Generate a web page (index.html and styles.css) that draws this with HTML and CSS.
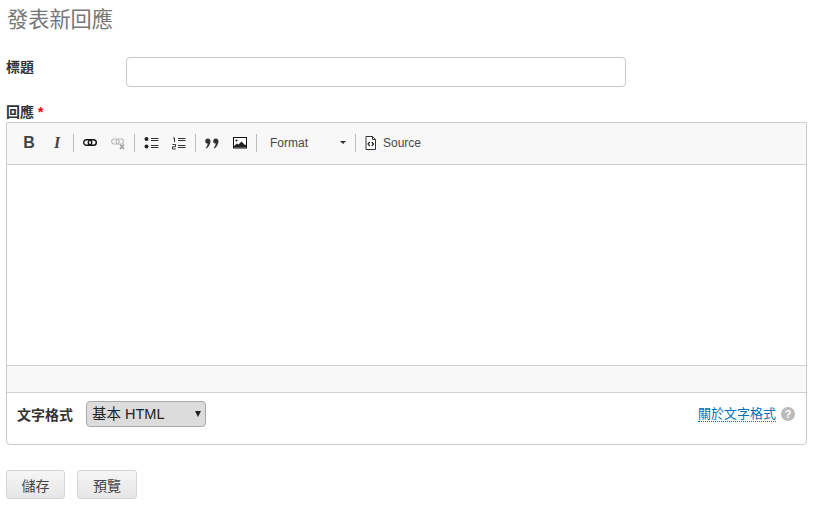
FILE: index.html
```html
<!DOCTYPE html>
<html lang="zh-Hant">
<head>
  <meta charset="UTF-8" />
  <title>發表新回應</title>
  <link rel="stylesheet" href="styles.css">
</head>
<body>
  <h2 class="page-title">發表新回應</h2>
  <form class="comment-form">
    <div class="title-row">
      <label class="field-label title-label" for="subject">標題</label>
      <input class="title-input" id="subject" type="text" />
    </div>
    <div class="field-label body-label">回應 <span class="required">*</span></div>
    <div class="filter-wrap">
      <div class="editor">
        <div class="toolbar">
          <span class="tool tool-b">B</span>
          <span class="tool tool-i">I</span>
          <span class="sep"></span>
          <span class="tool">
            <svg width="16" height="16" viewBox="0 0 16 16"><rect x="1.700" y="4.700" width="8" height="5.600" rx="2.800" fill="none" stroke="#111" stroke-width="1.400"/><rect x="6.300" y="4.700" width="8" height="5.600" rx="2.800" fill="none" stroke="#111" stroke-width="1.400"/></svg>
          </span>
          <span class="tool">
            <svg width="16" height="16" viewBox="0 0 16 16"><rect x="1.600" y="4" width="7.500" height="5" rx="2.500" fill="none" stroke="#bbb" stroke-width="1.200"/><rect x="6" y="4" width="7.500" height="5" rx="2.500" fill="none" stroke="#bbb" stroke-width="1.200"/><path d="M10 9.500l4 4.500M14 9.500L10 14" stroke="#999" stroke-width="1.300"/></svg>
          </span>
          <span class="sep"></span>
          <span class="tool">
            <svg width="16" height="16" viewBox="0 0 16 16"><circle cx="3.500" cy="4" r="2" fill="#222"/><circle cx="3.500" cy="11.500" r="2" fill="#222"/><path d="M8 3.500h7.500M8 5.500h7.500M8 10.500h7.500M8 12.500h7.500" stroke="#333" stroke-width="1"/></svg>
          </span>
          <span class="tool">
            <svg width="16" height="16" viewBox="0 0 16 16"><path d="M2 3h1.500v4" fill="none" stroke="#333" stroke-width="1"/><path d="M1.500 9.500h3v2.300h-3V14h3.200" fill="none" stroke="#333" stroke-width="1"/><path d="M7 3.500h7.500M7 5.500h7.500M7 10.500h7.500M7 12.500h7.500" stroke="#333" stroke-width="1"/></svg>
          </span>
          <span class="sep"></span>
          <span class="tool">
            <svg width="16" height="16" viewBox="0 0 16 16"><circle cx="3.800" cy="6" r="2.600" fill="#333"/><path d="M6.400 6c0 3.500-1.800 6-4 7.500l-.6-.7c1.200-1.300 1.800-2.800 1.800-4.300z" fill="#333"/><circle cx="11.800" cy="6" r="2.600" fill="#333"/><path d="M14.400 6c0 3.500-1.800 6-4 7.500l-.6-.7c1.200-1.300 1.800-2.800 1.800-4.300z" fill="#333"/></svg>
          </span>
          <span class="tool">
            <svg width="16" height="16" viewBox="0 0 16 16"><rect x="1.500" y="2.500" width="13" height="10.500" fill="#fff" stroke="#111"/><circle cx="4.500" cy="5.500" r="1.100" fill="#222"/><path d="M2 12.500v-1.500l3-2.500 1.500 1 3-3 3.500 3.500 1.500-.5v3z" fill="#222"/></svg>
          </span>
          <span class="sep"></span>
          <span class="format-combo">Format<span class="combo-arrow"></span></span>
          <span class="sep"></span>
          <span class="source-btn">
            <svg width="16" height="16" viewBox="0 0 16 16"><path d="M3 1.500h6.500l3 3v10H3z" fill="#fff" stroke="#333"/><path d="M9.500 1.500v3h3" fill="none" stroke="#333"/><path d="M6.800 7L5 9l1.800 2M8.700 7l1.800 2-1.800 2" fill="none" stroke="#222" stroke-width="1.200"/></svg>
            Source
          </span>
        </div>
        <div class="editor-content"></div>
        <div class="editor-footer"></div>
      </div>
      <div class="format-row">
        <label class="format-label" for="format">文字格式</label>
        <span class="select-wrap">
          <select class="format-select" id="format">
            <option>基本 HTML</option>
          </select>
        </span>
        <a class="format-help" href="#">關於文字格式</a>
        <span class="help-icon">?</span>
      </div>
    </div>
    <div class="actions">
      <button class="btn btn-save" type="button">儲存</button>
      <button class="btn btn-preview" type="button">預覽</button>
    </div>
  </form>
</body>
</html>
```

FILE: styles.css
```css
body {
  margin: 0;
  padding: 0 8px 0 6px;
  background: #fff;
  color: #333;
  font-family: "Liberation Sans", "Noto Sans CJK TC", sans-serif;
  font-size: 14px;
}
.page-title {
  margin: 0;
  padding: 6px 0 0 1px;
  height: 57px;
  box-sizing: border-box;
  font-size: 21.200px;
  line-height: 27px;
  font-weight: normal;
  color: #777;
}
.field-label {
  font-weight: bold;
  font-size: 14px;
  line-height: 20px;
  color: #333;
}
.title-row {
  display: flex;
  align-items: flex-start;
  height: 30px;
  margin-bottom: 15px;
}
.title-label {
  width: 120px;
}
.title-input {
  width: 500px;
  height: 30px;
  box-sizing: border-box;
  border: 1px solid #ccc;
  border-radius: 4px;
  background: #fff;
}
.body-label {
  height: 20px;
}
.required {
  color: #f00;
}
.filter-wrap {
  width: 801px;
  box-sizing: border-box;
  border: 1px solid #ccc;
  border-radius: 0 0 4px 4px;
}
.toolbar {
  display: flex;
  align-items: center;
  height: 39px;
  padding: 0 0 2px 8px;
  background: #f8f8f8;
  border-bottom: 1px solid #d1d1d1;
}
.tool {
  display: flex;
  align-items: center;
  justify-content: center;
  width: 28px;
  height: 20px;
  font-size: 16px;
  color: #444;
}
.tool-b {
  font-weight: bold;
}
.tool-i {
  font-family: "Liberation Serif", serif;
  font-style: italic;
  font-weight: bold;
}
.sep {
  width: 1px;
  height: 18px;
  margin: 0 2px;
  background: #bcbcbc;
}
.format-combo {
  display: flex;
  align-items: center;
  justify-content: space-between;
  width: 76px;
  padding: 0 7px 0 11px;
  font-size: 12px;
  color: #484848;
}
.combo-arrow {
  width: 0;
  height: 0;
  border: 3px solid transparent;
  border-top-color: #2f2f2f;
  border-bottom-width: 0;
}
.source-btn {
  display: flex;
  align-items: center;
  gap: 4px;
  padding-left: 5px;
  font-size: 12px;
  color: #484848;
}
.editor-content {
  height: 200px;
  background: #fff;
}
.editor-footer {
  height: 26px;
  background: #f8f8f8;
  border-top: 1px solid #d1d1d1;
  border-bottom: 1px solid #d1d1d1;
}
.format-row {
  display: flex;
  align-items: center;
  height: 51px;
  padding: 0 10px 10px;
  box-sizing: border-box;
}
.format-label {
  font-weight: bold;
  margin-right: 13px;
}
.select-wrap {
  position: relative;
  display: flex;
}
.select-wrap::after {
  content: "";
  position: absolute;
  top: 10px;
  right: 5px;
  border: 3.500px solid transparent;
  border-top: 6px solid #222;
  border-bottom-width: 0;
}
.format-select {
  appearance: none;
  width: 120px;
  height: 26px;
  border: 1px solid #aaa;
  border-radius: 4px;
  background: #dcdcdc;
  color: #222;
  font-family: inherit;
  font-size: 14.500px;
  padding: 0 0 0 5px;
}
.format-help {
  margin-left: auto;
  font-size: 13px;
  color: #0071b3;
  text-decoration: none;
  border-bottom: 1px dotted #0071b3;
  line-height: 15px;
}
.help-icon {
  display: flex;
  align-items: center;
  justify-content: center;
  width: 14px;
  height: 14px;
  margin-left: 5px;
  margin-right: 1px;
  border-radius: 50%;
  background: #bbb;
  color: #fff;
  font-size: 11px;
  font-weight: bold;
}
.actions {
  display: flex;
  gap: 12px;
  margin-top: 25px;
}
.btn {
  height: 29px;
  border: 1px solid #d4d4d4;
  border-radius: 3px;
  background: linear-gradient(to bottom, #f6f6f6, #e6e6e6);
  color: #444;
  font-family: inherit;
  font-size: 14px;
  padding: 0;
}
.btn-save {
  width: 59px;
}
.btn-preview {
  width: 60px;
}
```
